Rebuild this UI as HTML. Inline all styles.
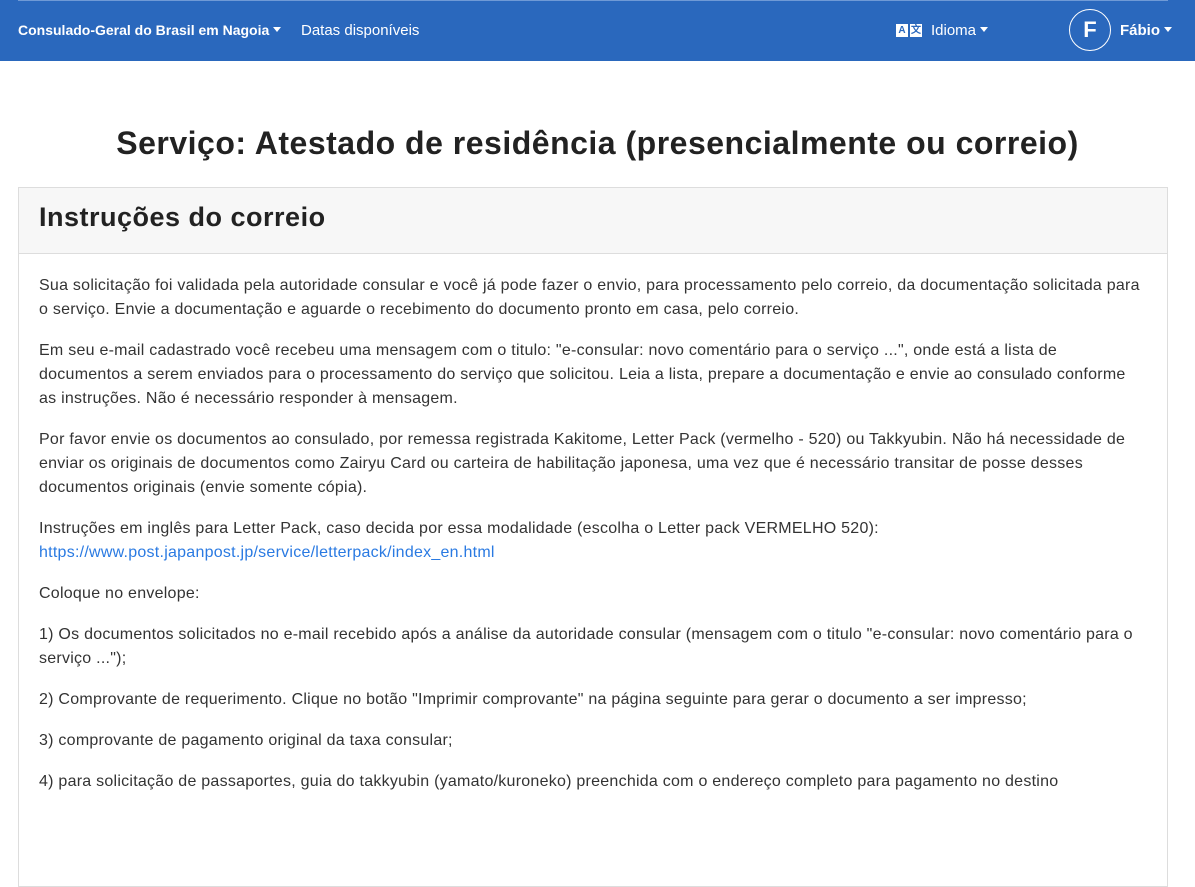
<!DOCTYPE html>
<html><head><meta charset="utf-8"><style>
*{box-sizing:border-box}
body{margin:0;background:#fff;font-family:"Liberation Sans",sans-serif;color:#333;width:1195px;height:785px;overflow:hidden}
.nav{position:absolute;left:0;top:0;width:1195px;height:61px;background:#2a68bd}
.nav .line{position:absolute;left:18px;top:0;width:1150px;height:1px;background:#6f9ad6}
.nav span{position:absolute;top:22px;color:#fff;font-size:15px;white-space:nowrap}
.caret{display:inline-block;border-left:4px solid transparent;border-right:4px solid transparent;border-top:5px solid #fff;vertical-align:3px;margin-left:4px}
.av{position:absolute;left:1069px;top:9px;width:42px;height:42px;border:1.5px solid #fff;border-radius:50%;color:#fff;font-weight:bold;font-size:22px;text-align:center;line-height:39px}
h1{position:absolute;left:0;width:1195px;top:125px;margin:0;text-align:center;font-size:32px;font-weight:bold;color:#222;letter-spacing:0.5px}
.card{position:absolute;left:18px;top:187px;width:1150px;height:700px;border:1px solid #ddd}
.ch{height:66px;background:#f7f7f7;border-bottom:1px solid #ddd;padding:14px 20px;font-size:27px;font-weight:bold;color:#222;letter-spacing:0.5px}
.cb{padding:20px 20px;font-size:16px;line-height:24px;color:#333;letter-spacing:0.25px}
.cb p{margin:0 0 17px;white-space:nowrap}
a{color:#2a7ae2;text-decoration:none}
</style></head><body>
<div class="nav"><div class="line"></div>
<span style="left:18px;font-weight:bold;font-size:14px;top:22px">Consulado-Geral do Brasil em Nagoia<i class="caret"></i></span>
<span style="left:301px">Datas disponíveis</span>
<span style="left:896px;top:24px;font-size:10px;line-height:13px"><b style="display:inline-block;background:#fff;color:#2a68bd;width:12px;text-align:center">A</b><b style="display:inline-block;background:#fff;color:#2a68bd;width:12px;margin-left:2px;text-align:center">文</b></span>
<span style="left:931px">Idioma<i class="caret"></i></span>
<div class="av">F</div>
<span style="left:1120px;font-weight:bold">Fábio<i class="caret"></i></span>
</div>
<h1>Serviço: Atestado de residência (presencialmente ou correio)</h1>
<div class="card"><div class="ch">Instruções do correio</div>
<div class="cb">
<p>Sua solicitação foi validada pela autoridade consular e você já pode fazer o envio, para processamento pelo correio, da documentação solicitada para<br>o serviço. Envie a documentação e aguarde o recebimento do documento pronto em casa, pelo correio.</p>
<p>Em seu e-mail cadastrado você recebeu uma mensagem com o titulo: "e-consular: novo comentário para o serviço ...", onde está a lista de<br>documentos a serem enviados para o processamento do serviço que solicitou. Leia a lista, prepare a documentação e envie ao consulado conforme<br>as instruções. Não é necessário responder à mensagem.</p>
<p>Por favor envie os documentos ao consulado, por remessa registrada Kakitome, Letter Pack (vermelho - 520) ou Takkyubin. Não há necessidade de<br>enviar os originais de documentos como Zairyu Card ou carteira de habilitação japonesa, uma vez que é necessário transitar de posse desses<br>documentos originais (envie somente cópia).</p>
<p>Instruções em inglês para Letter Pack, caso decida por essa modalidade (escolha o Letter pack VERMELHO 520):<br><a>https://www.post.japanpost.jp/service/letterpack/index_en.html</a></p>
<p>Coloque no envelope:</p>
<p>1) Os documentos solicitados no e-mail recebido após a análise da autoridade consular (mensagem com o titulo "e-consular: novo comentário para o<br>serviço ...");</p>
<p>2) Comprovante de requerimento. Clique no botão "Imprimir comprovante" na página seguinte para gerar o documento a ser impresso;</p>
<p>3) comprovante de pagamento original da taxa consular;</p>
<p>4) para solicitação de passaportes, guia do takkyubin (yamato/kuroneko) preenchida com o endereço completo para pagamento no destino</p>
</div></div>
</body></html>
